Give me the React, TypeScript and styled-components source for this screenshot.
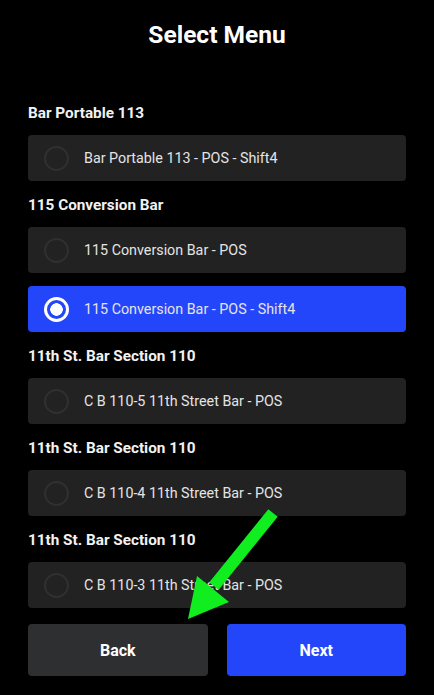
import styled, { createGlobalStyle } from "styled-components";

type MenuOption = { id: string; name: string };
type MenuGroup = { title: string; options: MenuOption[] };

const GROUPS: MenuGroup[] = [
  {
    title: "Bar Portable 113",
    options: [{ id: "bp113", name: "Bar Portable 113 - POS - Shift4" }],
  },
  {
    title: "115 Conversion Bar",
    options: [
      { id: "cb115", name: "115 Conversion Bar - POS" },
      { id: "cb115s4", name: "115 Conversion Bar - POS - Shift4" },
    ],
  },
  {
    title: "11th St. Bar Section 110",
    options: [{ id: "cb1105", name: "C B 110-5 11th Street Bar - POS" }],
  },
  {
    title: "11th St. Bar Section 110",
    options: [{ id: "cb1104", name: "C B 110-4 11th Street Bar - POS" }],
  },
  {
    title: "11th St. Bar Section 110",
    options: [{ id: "cb1103", name: "C B 110-3 11th Street Bar - POS" }],
  },
];

const SELECTED = "cb115s4";

const App = () => {
  return (
    <>
      <GlobalStyle />
      <Screen>
        <Title>Select Menu</Title>
        <List>
          {GROUPS.map((group, i) => (
            <Group key={i}>
              <GroupTitle>{group.title}</GroupTitle>
              {group.options.map((opt) => (
                <OptionRow key={opt.id} $selected={opt.id === SELECTED}>
                  <Radio $selected={opt.id === SELECTED} />
                  <OptionText>{opt.name}</OptionText>
                </OptionRow>
              ))}
            </Group>
          ))}
        </List>
        <Footer>
          <Button $variant="secondary">Back</Button>
          <Button $variant="primary">Next</Button>
        </Footer>
        <Arrow viewBox="0 0 434 695">
          <line x1="273" y1="513" x2="214" y2="586" stroke="#10ee20" strokeWidth="12" />
          <polygon points="188,619 229,602 197,576" fill="#10ee20" />
        </Arrow>
      </Screen>
    </>
  );
};

const GlobalStyle = createGlobalStyle`
  html, body {
    margin: 0;
    background: #000;
  }
  body {
    font-family: Roboto, "Noto Sans", sans-serif;
    color: #fff;
  }
`;

const Screen = styled.div`
  position: relative;
  width: 434px;
  height: 695px;
  box-sizing: border-box;
  padding: 20px 28px 0;
  display: flex;
  flex-direction: column;
  overflow: hidden;
`;

const Title = styled.h1`
  margin: 0;
  text-align: center;
  font-size: 24.5px;
  font-weight: 700;
  line-height: 29px;
`;

const List = styled.div`
  display: flex;
  flex-direction: column;
  gap: 15px;
  margin-top: 55px;
`;

const Group = styled.div`
  display: flex;
  flex-direction: column;
  gap: 13px;
`;

const GroupTitle = styled.div`
  font-size: 15.3px;
  font-weight: 700;
  line-height: 18px;
  color: #f2f2f2;
`;

const OptionRow = styled.div<{ $selected: boolean }>`
  height: 46px;
  border-radius: 4px;
  display: flex;
  align-items: center;
  padding-left: 16px;
  gap: 15px;
  background: ${(p) => (p.$selected ? "#2446fb" : "#222223")};
`;

const Radio = styled.span<{ $selected: boolean }>`
  width: 25px;
  height: 25px;
  box-sizing: border-box;
  border-radius: 50%;
  flex-shrink: 0;
  border: ${(p) => (p.$selected ? "3px solid #fff" : "2px solid #303031")};
  background: ${(p) =>
    p.$selected ? "radial-gradient(circle, #fff 0 6px, transparent 6.5px)" : "transparent"};
`;

const OptionText = styled.span`
  font-size: 14.3px;
  color: #e4e4e4;
`;

const Footer = styled.div`
  display: grid;
  grid-template-columns: 1fr 1fr;
  gap: 19px;
  margin-top: 16px;
`;

const Button = styled.div<{ $variant: "primary" | "secondary" }>`
  height: 52px;
  border-radius: 4px;
  display: flex;
  align-items: center;
  justify-content: center;
  font-size: 16px;
  font-weight: 700;
  color: #fff;
  background: ${(p) => (p.$variant === "primary" ? "#2446fb" : "#2e2f30")};
`;

const Arrow = styled.svg`
  position: absolute;
  inset: 0;
  width: 434px;
  height: 695px;
  pointer-events: none;
`;

export default App;
